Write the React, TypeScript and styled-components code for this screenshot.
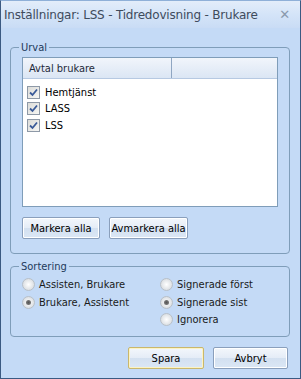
import styled, { createGlobalStyle } from 'styled-components';

const UI_FONT = "'DejaVu Sans Condensed', 'Liberation Sans', Arial, sans-serif";

const GlobalStyle = createGlobalStyle`
  html, body {
    margin: 0;
    padding: 0;
    background: #c4daf6;
  }
  * {
    box-sizing: border-box;
  }
`;

const Window = styled.div`
  width: 301px;
  height: 379px;
  display: flex;
  flex-direction: column;
  background: #c4daf6;
  border: 1px solid #3b5a82;
  border-top-color: #8fb0d8;
  font-family: ${UI_FONT};
  font-size: 11px;
  color: #000;
  overflow: hidden;
`;

const TitleBar = styled.div`
  height: 27px;
  flex: none;
  display: flex;
  align-items: center;
  justify-content: space-between;
  padding: 0 10px 0 3px;
  background: linear-gradient(to bottom, #e3edfa, #d4e4f8 50%, #c9dcf5);
  color: #3e4b5c;
  font-family: 'DejaVu Sans', sans-serif;
  font-size: 12px;
  letter-spacing: -0.2px;
`;

const CloseMark = styled.span`
  color: #8a99ad;
  font-size: 13px;
  font-weight: bold;
`;

const Body = styled.div`
  flex: 1;
  display: flex;
  flex-direction: column;
  padding: 13px 10px 0 9px;
`;

const Group = styled.fieldset<{ $height: number }>`
  margin: 0;
  padding: 0 11px;
  height: ${p => p.$height}px;
  border: 1px solid #7f9db9;
  border-radius: 4px;
  display: flex;
  flex-direction: column;

  & + & {
    margin-top: 6px;
  }
`;

const Legend = styled.legend`
  padding: 0 2px;
  margin-left: -3px;
  color: #1e395b;
`;

const ListBox = styled.div`
  height: 150px;
  background: #fff;
  border: 1px solid #7f9db9;
  margin-top: 3px;
  display: flex;
  flex-direction: column;
`;

const ListHeader = styled.div`
  height: 21px;
  flex: none;
  display: flex;
  background: linear-gradient(to bottom, #f1f5fb, #dbe6f4);
  border-bottom: 1px solid #b6c9e2;
`;

const HeaderCell = styled.div<{ $width?: number }>`
  width: ${p => (p.$width ? `${p.$width}px` : 'auto')};
  flex: ${p => (p.$width ? 'none' : '1')};
  display: flex;
  align-items: center;
  padding-left: 6px;
  color: #1e2a3a;
  border-right: ${p => (p.$width ? '1px solid #8fa6c2' : 'none')};
`;

const Rows = styled.div`
  padding: 5px 0 0 4px;
  display: flex;
  flex-direction: column;
`;

const Row = styled.label`
  height: 16.5px;
  display: flex;
  align-items: center;
  gap: 5px;
`;

const CheckBox = styled.span`
  width: 13px;
  height: 13px;
  border: 1px solid #8e99a7;
  background: linear-gradient(135deg, #dcdcd8, #f6f6f4);
  display: flex;
  align-items: center;
  justify-content: center;
`;

const ButtonRow = styled.div<{ $justify?: string }>`
  display: flex;
  gap: 9px;
  justify-content: ${p => p.$justify || 'flex-start'};
`;

const Button = styled.button<{ $width: number; $focused?: boolean }>`
  width: ${p => p.$width}px;
  height: 22px;
  padding: 0;
  white-space: nowrap;
  font-family: ${UI_FONT};
  font-size: 11px;
  color: #000;
  border: 1px solid ${p => (p.$focused ? '#c9b76d' : '#8a9fbc')};
  border-radius: 2px;
  background: linear-gradient(to bottom, #f3f7fc, #e4ecf7 50%, #d3e0f0 51%, #dbe7f5);
  box-shadow: ${p => (p.$focused ? 'inset 0 0 0 1px #fcf3c4' : 'inset 0 0 0 1px #fff')};
`;

const RadioGrid = styled.div`
  display: grid;
  grid-template-columns: 138px 1fr;
  grid-template-rows: repeat(3, 17.5px);
  padding-top: 3px;
`;

const RadioItem = styled.label<{ $col: number; $row: number }>`
  grid-column: ${p => p.$col};
  grid-row: ${p => p.$row};
  display: flex;
  align-items: center;
  gap: 4px;
  color: #1a1a1a;
`;

const Radio = styled.span<{ $checked?: boolean }>`
  width: 13px;
  height: 13px;
  border-radius: 50%;
  border: 1px solid #b8c0c8;
  background: radial-gradient(circle at 50% 50%, #fff, #d8dce0 80%);
  display: flex;
  align-items: center;
  justify-content: center;

  &::after {
    content: '';
    width: 5px;
    height: 5px;
    border-radius: 50%;
    background: ${p => (p.$checked ? 'radial-gradient(circle, #555, #888)' : 'transparent')};
  }
`;

const Footer = styled.div`
  padding: 10px 2px 0 0;
`;

const Check = () => (
  <svg width="9" height="9" viewBox="0 0 9 9">
    <path d="M1 4.5 L3.5 7 L8 1.5" fill="none" stroke="#3a5a98" strokeWidth="1.8" />
  </svg>
);

const items = ['Hemtjänst', 'LASS', 'LSS'];

const radios = [
  { label: 'Assisten, Brukare', col: 1, row: 1, checked: false },
  { label: 'Brukare, Assistent', col: 1, row: 2, checked: true },
  { label: 'Signerade först', col: 2, row: 1, checked: false },
  { label: 'Signerade sist', col: 2, row: 2, checked: true },
  { label: 'Ignorera', col: 2, row: 3, checked: false },
];

export default function App() {
  return (
    <>
      <GlobalStyle />
      <Window>
        <TitleBar>
          <span>Inställningar: LSS - Tidredovisning - Brukare</span>
          <CloseMark>✕</CloseMark>
        </TitleBar>
        <Body>
          <Group $height={213}>
            <Legend>Urval</Legend>
            <ListBox>
              <ListHeader>
                <HeaderCell $width={149}>Avtal brukare</HeaderCell>
                <HeaderCell />
              </ListHeader>
              <Rows>
                {items.map(item => (
                  <Row key={item}>
                    <CheckBox>
                      <Check />
                    </CheckBox>
                    {item}
                  </Row>
                ))}
              </Rows>
            </ListBox>
            <ButtonRow style={{ marginTop: 10 }}>
              <Button $width={78}>Markera alla</Button>
              <Button $width={79}>Avmarkera alla</Button>
            </ButtonRow>
          </Group>
          <Group $height={77}>
            <Legend>Sortering</Legend>
            <RadioGrid>
              {radios.map(r => (
                <RadioItem key={r.label} $col={r.col} $row={r.row}>
                  <Radio $checked={r.checked} />
                  {r.label}
                </RadioItem>
              ))}
            </RadioGrid>
          </Group>
          <Footer>
            <ButtonRow $justify="flex-end">
              <Button $width={76} $focused>Spara</Button>
              <Button $width={75}>Avbryt</Button>
            </ButtonRow>
          </Footer>
        </Body>
      </Window>
    </>
  );
}
